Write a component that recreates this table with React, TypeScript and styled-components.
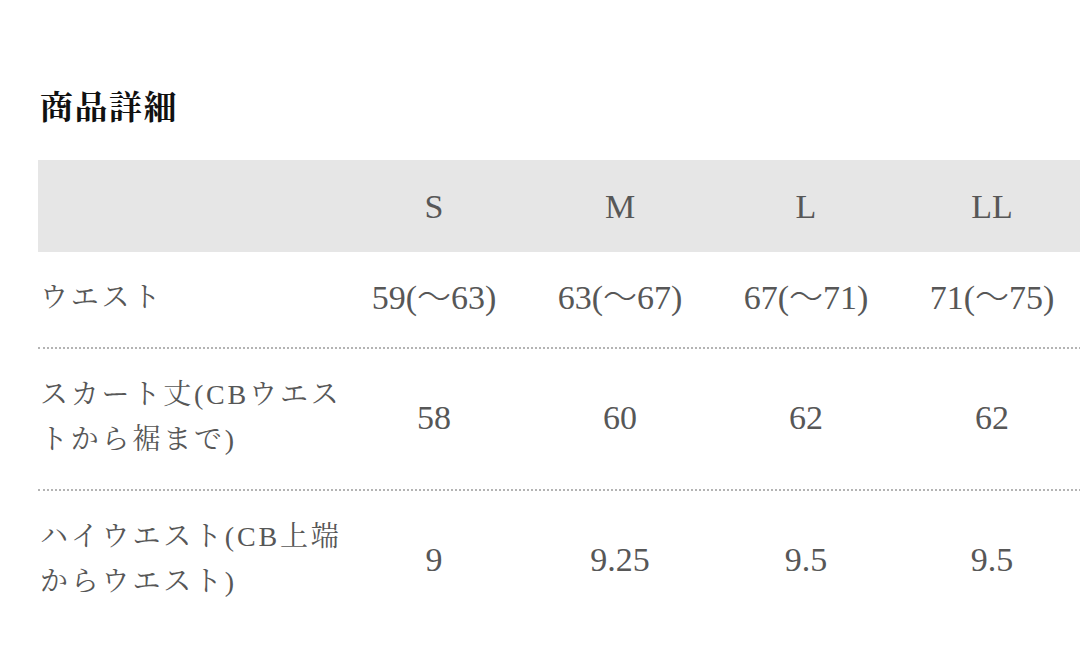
import React from "react";
import styled, { createGlobalStyle } from "styled-components";

const GlobalStyle = createGlobalStyle`
  html, body {
    margin: 0;
    padding: 0;
    background: #ffffff;
    overflow: hidden;
  }
  body {
    font-family: "Liberation Serif", "Noto Serif CJK JP", "Noto Sans CJK JP", serif;
  }
`;

const Page = styled.div`
  width: 1080px;
  height: 652px;
  padding: 84px 0 0 38px;
  box-sizing: border-box;
  overflow: hidden;
`;

const Title = styled.h2`
  margin: 0 0 28px 2px;
  font-family: "Liberation Serif", "Noto Serif CJK JP", "Noto Sans CJK JP", serif;
  font-size: 33px;
  line-height: 48px;
  font-weight: 700;
  color: #111111;
  letter-spacing: 1.5px;
`;

const Table = styled.div`
  display: flex;
  flex-direction: column;
  width: 1047px;
`;

const Row = styled.div<{ $head?: boolean; $last?: boolean }>`
  display: grid;
  grid-template-columns: 303px repeat(4, 186px);
  align-items: center;
  padding: ${(p) => (p.$head ? "23.5px 0" : "23px 0 27px")};
  background: ${(p) => (p.$head ? "#e6e6e6" : "transparent")};
  border-bottom: ${(p) => (p.$head || p.$last ? "none" : "2px dotted #b4b4b4")};
`;

const Label = styled.div`
  padding-left: 2px;
  font-family: "Liberation Serif", "Noto Serif CJK JP", "Noto Sans CJK JP", serif;
  font-size: 28px;
  line-height: 45px;
  color: #575757;
  white-space: nowrap;
  letter-spacing: 2.8px;
`;

const Value = styled.div`
  text-align: center;
  font-family: "Liberation Serif", "Noto Serif CJK JP", "Noto Sans CJK JP", serif;
  font-size: 34px;
  line-height: 45px;
  height: 45px;
  color: #575757;
  white-space: nowrap;
`;

const Tilde = styled.span`
  font-family: "Noto Sans CJK JP", sans-serif;
  font-weight: 300;
  line-height: 1;
`;

const sizes = ["S", "M", "L", "LL"];

type RowData = { label: string[]; values: React.ReactNode[] };

const range = (a: string, b: string) => (
  <>
    {a}(<Tilde>〜</Tilde>
    {b})
  </>
);

const rows: RowData[] = [
  {
    label: ["ウエスト"],
    values: [range("59", "63"), range("63", "67"), range("67", "71"), range("71", "75")],
  },
  {
    label: ["スカート丈(CBウエス", "トから裾まで)"],
    values: ["58", "60", "62", "62"],
  },
  {
    label: ["ハイウエスト(CB上端", "からウエスト)"],
    values: ["9", "9.25", "9.5", "9.5"],
  },
];

export default function App() {
  return (
    <>
      <GlobalStyle />
      <Page>
        <Title>商品詳細</Title>
        <Table>
          <Row $head>
            <Label />
            {sizes.map((s) => (
              <Value key={s}>{s}</Value>
            ))}
          </Row>
          {rows.map((r, i) => (
            <Row key={i} $last={i === rows.length - 1}>
              <Label>
                {r.label.map((l, j) => (
                  <React.Fragment key={j}>
                    {j > 0 && <br />}
                    {l}
                  </React.Fragment>
                ))}
              </Label>
              {r.values.map((v, j) => (
                <Value key={j}>{v}</Value>
              ))}
            </Row>
          ))}
        </Table>
      </Page>
    </>
  );
}
